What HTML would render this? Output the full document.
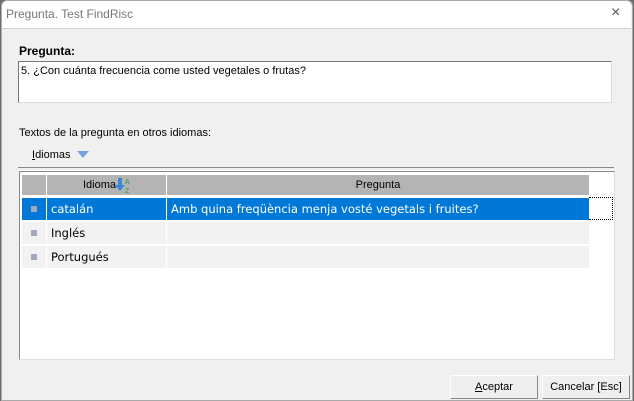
<!DOCTYPE html>
<html><head><style>
body{margin:0;width:634px;height:401px;background:#6d6d6d;font-family:"Liberation Sans",sans-serif;font-size:11px;position:relative;overflow:hidden}
.a{position:absolute}
.r{font-family:'DejaVu Sans',sans-serif;font-size:11.5px;line-height:22px;padding-left:4px;box-sizing:border-box}
</style></head><body>
<div class="a" style="left:1px;top:0;width:632px;height:401px;background:#f0f0f0;border:1px solid #aaa;border-radius:6px 6px 0 0;box-sizing:border-box"></div>
<div class="a" style="left:2px;top:1px;width:629px;height:27px;background:#fff;border-radius:6px 6px 0 0;border-bottom:1px solid #d0d0d0"></div>
<div class="a" style="left:6px;top:7px;font-size:12px;color:#777">Pregunta. Test FindRisc</div>
<div class="a" style="left:611px;top:4px;font-size:16px;color:#555">×</div>
<div class="a" style="left:19px;top:44px;font-weight:bold;font-size:12px">Pregunta:</div>
<div class="a" style="left:18px;top:61px;width:594px;height:42px;background:#fff;border-top:1px solid #777;border-left:1px solid #777;border-right:1px solid #ddd;border-bottom:1px solid #ddd;box-sizing:border-box"></div>
<div class="a" style="left:21px;top:65px;font-size:11px">5. ¿Con cuánta frecuencia come usted vegetales o frutas?</div>
<div class="a" style="left:19px;top:127px">Textos de la pregunta en otros idiomas:</div>
<div class="a" style="left:32px;top:149px"><u>I</u>diomas</div>
<div class="a" style="left:77px;top:151px;width:0;height:0;border-left:6px solid transparent;border-right:6px solid transparent;border-top:7px solid #7b9ee0"></div>
<div class="a" style="left:18px;top:167px;width:596px;height:2px;border-top:1px solid #888;border-bottom:1px solid #fff"></div>
<div class="a" style="left:19px;top:171px;width:596px;height:189px;background:#fff;border:1px solid #888;border-right-color:#ddd;border-bottom-color:#ddd;box-sizing:border-box"></div>
<div class="a" style="left:22px;top:175px;width:24px;height:20px;background:#b4b4b4"></div>
<div class="a" style="left:47px;top:175px;width:119px;height:20px;background:#b4b4b4"></div>
<div class="a" style="left:83px;top:178px;line-height:14px">Idioma</div>
<svg class="a" style="left:115px;top:176px" width="16" height="18" viewBox="0 0 16 18">
<path d="M3 2h4v7h3l-5 6-5-6h3z" fill="#3a86d8"/>
<text x="10" y="8" font-size="7" fill="#2a9a3a" font-family="Liberation Sans">A</text>
<text x="10" y="17" font-size="7" fill="#2a9a3a" font-family="Liberation Sans">Z</text>
</svg>
<div class="a" style="left:167px;top:175px;width:422px;height:20px;background:#b4b4b4;text-align:center;line-height:20px">Pregunta</div>
<div class="a" style="left:22px;top:198px;width:24px;height:22px;background:#0078d7"></div>
<div class="a r" style="left:47px;top:198px;width:119px;height:22px;background:#0078d7;color:#fff">catalán</div>
<div class="a r" style="left:167px;top:198px;width:422px;height:22px;background:#0078d7;color:#fff">Amb quina freqüència menja vosté vegetals i fruites?</div>
<div class="a" style="left:589px;top:197px;width:24px;height:23px;border:1px dotted #000;border-left:none;box-sizing:border-box"></div>
<div class="a" style="left:22px;top:222px;width:24px;height:22px;background:#f2f2f2"></div>
<div class="a r" style="left:47px;top:222px;width:119px;height:22px;background:#f2f2f2">Inglés</div>
<div class="a" style="left:167px;top:222px;width:422px;height:22px;background:#f2f2f2"></div>
<div class="a" style="left:22px;top:246px;width:24px;height:22px;background:#f2f2f2"></div>
<div class="a r" style="left:47px;top:246px;width:119px;height:22px;background:#f2f2f2">Portugués</div>
<div class="a" style="left:167px;top:246px;width:422px;height:22px;background:#f2f2f2"></div>
<div class="a" style="left:31px;top:206px;width:6px;height:6px;background:#a0a8c0"></div>
<div class="a" style="left:31px;top:230px;width:6px;height:6px;background:#a0a8c0"></div>
<div class="a" style="left:31px;top:254px;width:6px;height:6px;background:#a0a8c0"></div>
<div class="a" style="left:450px;top:375px;width:88px;height:24px;background:#efefef;border:1px solid #888;border-top-color:#fff;border-left-color:#fff;box-sizing:border-box;text-align:center;line-height:22px"><u>A</u>ceptar</div>
<div class="a" style="left:542px;top:375px;width:88px;height:24px;background:#efefef;border:1px solid #888;border-top-color:#fff;border-left-color:#fff;box-sizing:border-box;text-align:center;line-height:22px">Cancelar [Esc]</div>
</body></html>
